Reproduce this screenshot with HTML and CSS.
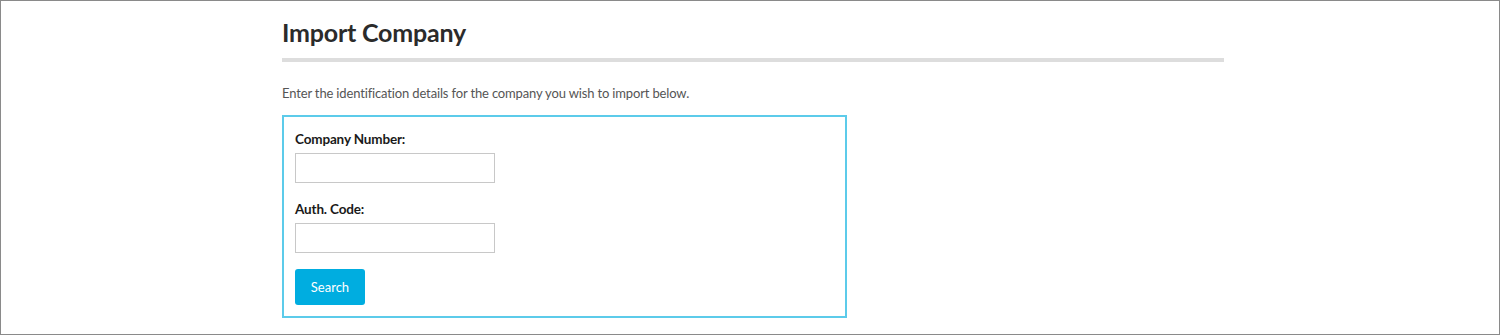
FILE: index.html
```html
<!DOCTYPE html>
<html>
  <head>
    <title>Import Company</title>
    <link rel="stylesheet" href="styles.css">
  </head>
  <body>
    <div class="frame">
      <div class="page">
        <h1>Import Company</h1>
        <p class="intro">Enter the identification details for the company you wish to import below.</p>

        <form class="import-box" onsubmit="return false;">
          <div class="field">
            <label for="companyNumber">Company Number:</label>
            <input type="text" id="companyNumber" />
          </div>
          <div class="field">
            <label for="authCode">Auth. Code:</label>
            <input type="text" id="authCode" />
          </div>
          <button type="submit" class="search">Search</button>
        </form>
      </div>
    </div>
  </body>
</html>
```

FILE: styles.css
```css
body {
  margin: 0;
  font-family: Lato, "Open Sans", Arial, sans-serif;
  color: #333;
  background-color: white;
}
.frame {
  box-sizing: border-box;
  height: 335px;
  border: 1px solid #8a8a8a;
}
.page {
  width: 942px;
  margin-left: 281px;
}
h1 {
  margin: 0;
  padding-top: 15px;
  padding-bottom: 10px;
  font-size: 25px;
  letter-spacing: -0.2px;
  font-weight: bold;
  line-height: 32px;
  color: #2b2b2b;
  border-bottom: 4px solid #dddddd;
}
.intro {
  margin: 22px 0 13px;
  font-size: 13px;
  letter-spacing: -0.15px;
  line-height: 18px;
  color: #555;
}
.import-box {
  box-sizing: border-box;
  width: 565px;
  height: 203px;
  margin: 0;
  padding: 13px 11px 12px;
  border: 2px solid #5ccbea;
}
.field {
  margin-bottom: 17px;
}
.field:last-of-type {
  margin-bottom: 14px;
}
.field label {
  display: block;
  margin-bottom: 5px;
  font-size: 13.5px;
  letter-spacing: -0.15px;
  line-height: 18px;
  font-weight: bold;
  color: #1a1a1a;
}
.field input {
  box-sizing: border-box;
  display: block;
  width: 200px;
  height: 30px;
  margin: 0;
  border: 1px solid #c8c8c8;
}
button {
  padding: 0;
  border: none;
  border-radius: 3px;
  cursor: pointer;
  font-family: inherit;
}
.search {
  width: 70px;
  height: 36px;
  margin-top: 2px;
  background-color: #00ade0;
  color: white;
  font-size: 13px;
}
```
